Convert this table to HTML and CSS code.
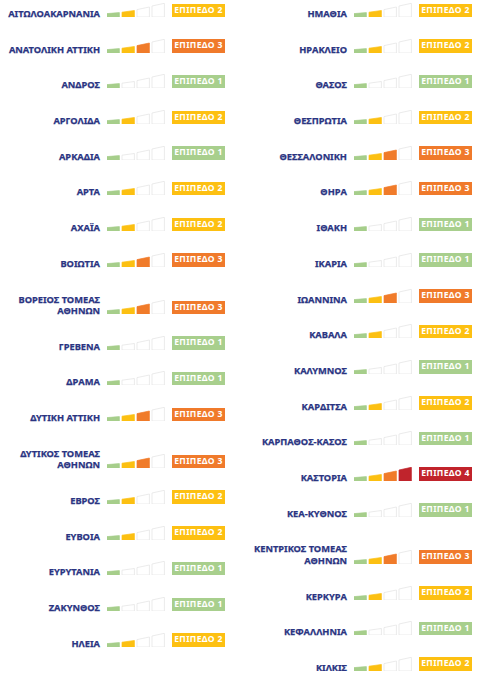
FILE: index.html
```html
<!DOCTYPE html>
<html lang="el">

<head>
    <meta charset="UTF-8">
    <meta name="viewport" content="width=device-width, initial-scale=1.0">
    <title>Επίπεδα επιφυλακής</title>
    <link rel="stylesheet" href="styles.css">
</head>

<body>
    <div class="board">
        <div class="column" id="colLeft"></div>
        <div class="column" id="colRight"></div>
    </div>
    <script>
        const left = [
            ["ΑΙΤΩΛΟΑΚΑΡΝΑΝΙΑ", 2], ["ΑΝΑΤΟΛΙΚΗ ΑΤΤΙΚΗ", 3], ["ΑΝΔΡΟΣ", 1], ["ΑΡΓΟΛΙΔΑ", 2],
            ["ΑΡΚΑΔΙΑ", 1], ["ΑΡΤΑ", 2], ["ΑΧΑΪΑ", 2], ["ΒΟΙΩΤΙΑ", 3],
            ["ΒΟΡΕΙΟΣ ΤΟΜΕΑΣ<br>ΑΘΗΝΩΝ", 3], ["ΓΡΕΒΕΝΑ", 1], ["ΔΡΑΜΑ", 1], ["ΔΥΤΙΚΗ ΑΤΤΙΚΗ", 3],
            ["ΔΥΤΙΚΟΣ ΤΟΜΕΑΣ<br>ΑΘΗΝΩΝ", 3], ["ΕΒΡΟΣ", 2], ["ΕΥΒΟΙΑ", 2], ["ΕΥΡΥΤΑΝΙΑ", 1],
            ["ΖΑΚΥΝΘΟΣ", 1], ["ΗΛΕΙΑ", 2]
        ];
        const right = [
            ["ΗΜΑΘΙΑ", 2], ["ΗΡΑΚΛΕΙΟ", 2], ["ΘΑΣΟΣ", 1], ["ΘΕΣΠΡΩΤΙΑ", 2],
            ["ΘΕΣΣΑΛΟΝΙΚΗ", 3], ["ΘΗΡΑ", 3], ["ΙΘΑΚΗ", 1], ["ΙΚΑΡΙΑ", 1],
            ["ΙΩΑΝΝΙΝΑ", 3], ["ΚΑΒΑΛΑ", 2], ["ΚΑΛΥΜΝΟΣ", 1], ["ΚΑΡΔΙΤΣΑ", 2],
            ["ΚΑΡΠΑΘΟΣ-ΚΑΣΟΣ", 1], ["ΚΑΣΤΟΡΙΑ", 4], ["ΚΕΑ-ΚΥΘΝΟΣ", 1], ["ΚΕΝΤΡΙΚΟΣ ΤΟΜΕΑΣ<br>ΑΘΗΝΩΝ", 3],
            ["ΚΕΡΚΥΡΑ", 2], ["ΚΕΦΑΛΛΗΝΙΑ", 1], ["ΚΙΛΚΙΣ", 2]
        ];

        // one trapezoid per step, tops rising left to right
        const bars = [
            "0,14 0,10.6 12.4,9.6 12.4,14",
            "15,14 15,9.2 27.4,7.5 27.4,14",
            "30,14 30,6.6 42.4,4 42.4,14",
            "45,14 45,3 57.4,0.3 57.4,14"
        ];

        function buildRows(list, containerId) {
            let container = document.getElementById(containerId);
            list.forEach(([name, level]) => {
                let polys = bars.map((pts, i) =>
                    `<polygon class="${i < level ? "step-" + (i + 1) : "step-off"}" points="${pts}"/>`
                ).join("");
                let row = document.createElement("div");
                row.classList.add("row");
                row.innerHTML = `
                    <div class="name">${name}</div>
                    <svg class="bars" viewBox="0 0 58 14" width="58" height="14">${polys}</svg>
                    <div class="badge badge-${level}">ΕΠΙΠΕΔΟ ${level}</div>
                `;
                container.appendChild(row);
            });
        }

        buildRows(left, "colLeft");
        buildRows(right, "colRight");
    </script>
</body>

</html>
```

FILE: styles.css
```css
body {
    margin: 0;
    background-color: #ffffff;
    font-family: "Noto Sans", "DejaVu Sans", sans-serif;
}

.board {
    display: grid;
    grid-template-columns: 225px 225px;
    column-gap: 22px;
    align-items: start;
    padding-top: 2px;
}

.column {
    display: flex;
    flex-direction: column;
    gap: 20.7px;
}

.row {
    display: grid;
    grid-template-columns: 100px 58px 53px;
    column-gap: 7px;
    align-items: end;
}

.name {
    text-align: right;
    color: #2a3482;
    font-size: 9.3px;
    font-weight: 700;
    line-height: 11.5px;
    padding-top: 6px;
    margin-bottom: -2.5px;
    white-space: nowrap;
    -webkit-text-stroke: 0.25px #2a3482;
}

.bars {
    display: block;
}

.bars polygon {
    stroke-width: 0.7;
}

.step-1 { fill: #a6ce8b; stroke: #a6ce8b; }
.step-2 { fill: #fcc012; stroke: #fcc012; }
.step-3 { fill: #f07b2a; stroke: #f07b2a; }
.step-4 { fill: #c0242c; stroke: #c0242c; }
.step-off { fill: #ffffff; stroke: #e3e3e3; }

.badge {
    height: 13.5px;
    line-height: 13.5px;
    text-align: center;
    color: #ffffff;
    font-size: 8.6px;
    font-weight: 700;
    letter-spacing: 0.35px;
    white-space: nowrap;
}

.badge-1 { background-color: #a8cf8d; }
.badge-2 { background-color: #fdc012; }
.badge-3 { background-color: #f07a2b; }
.badge-4 { background-color: #c1232b; }
```
